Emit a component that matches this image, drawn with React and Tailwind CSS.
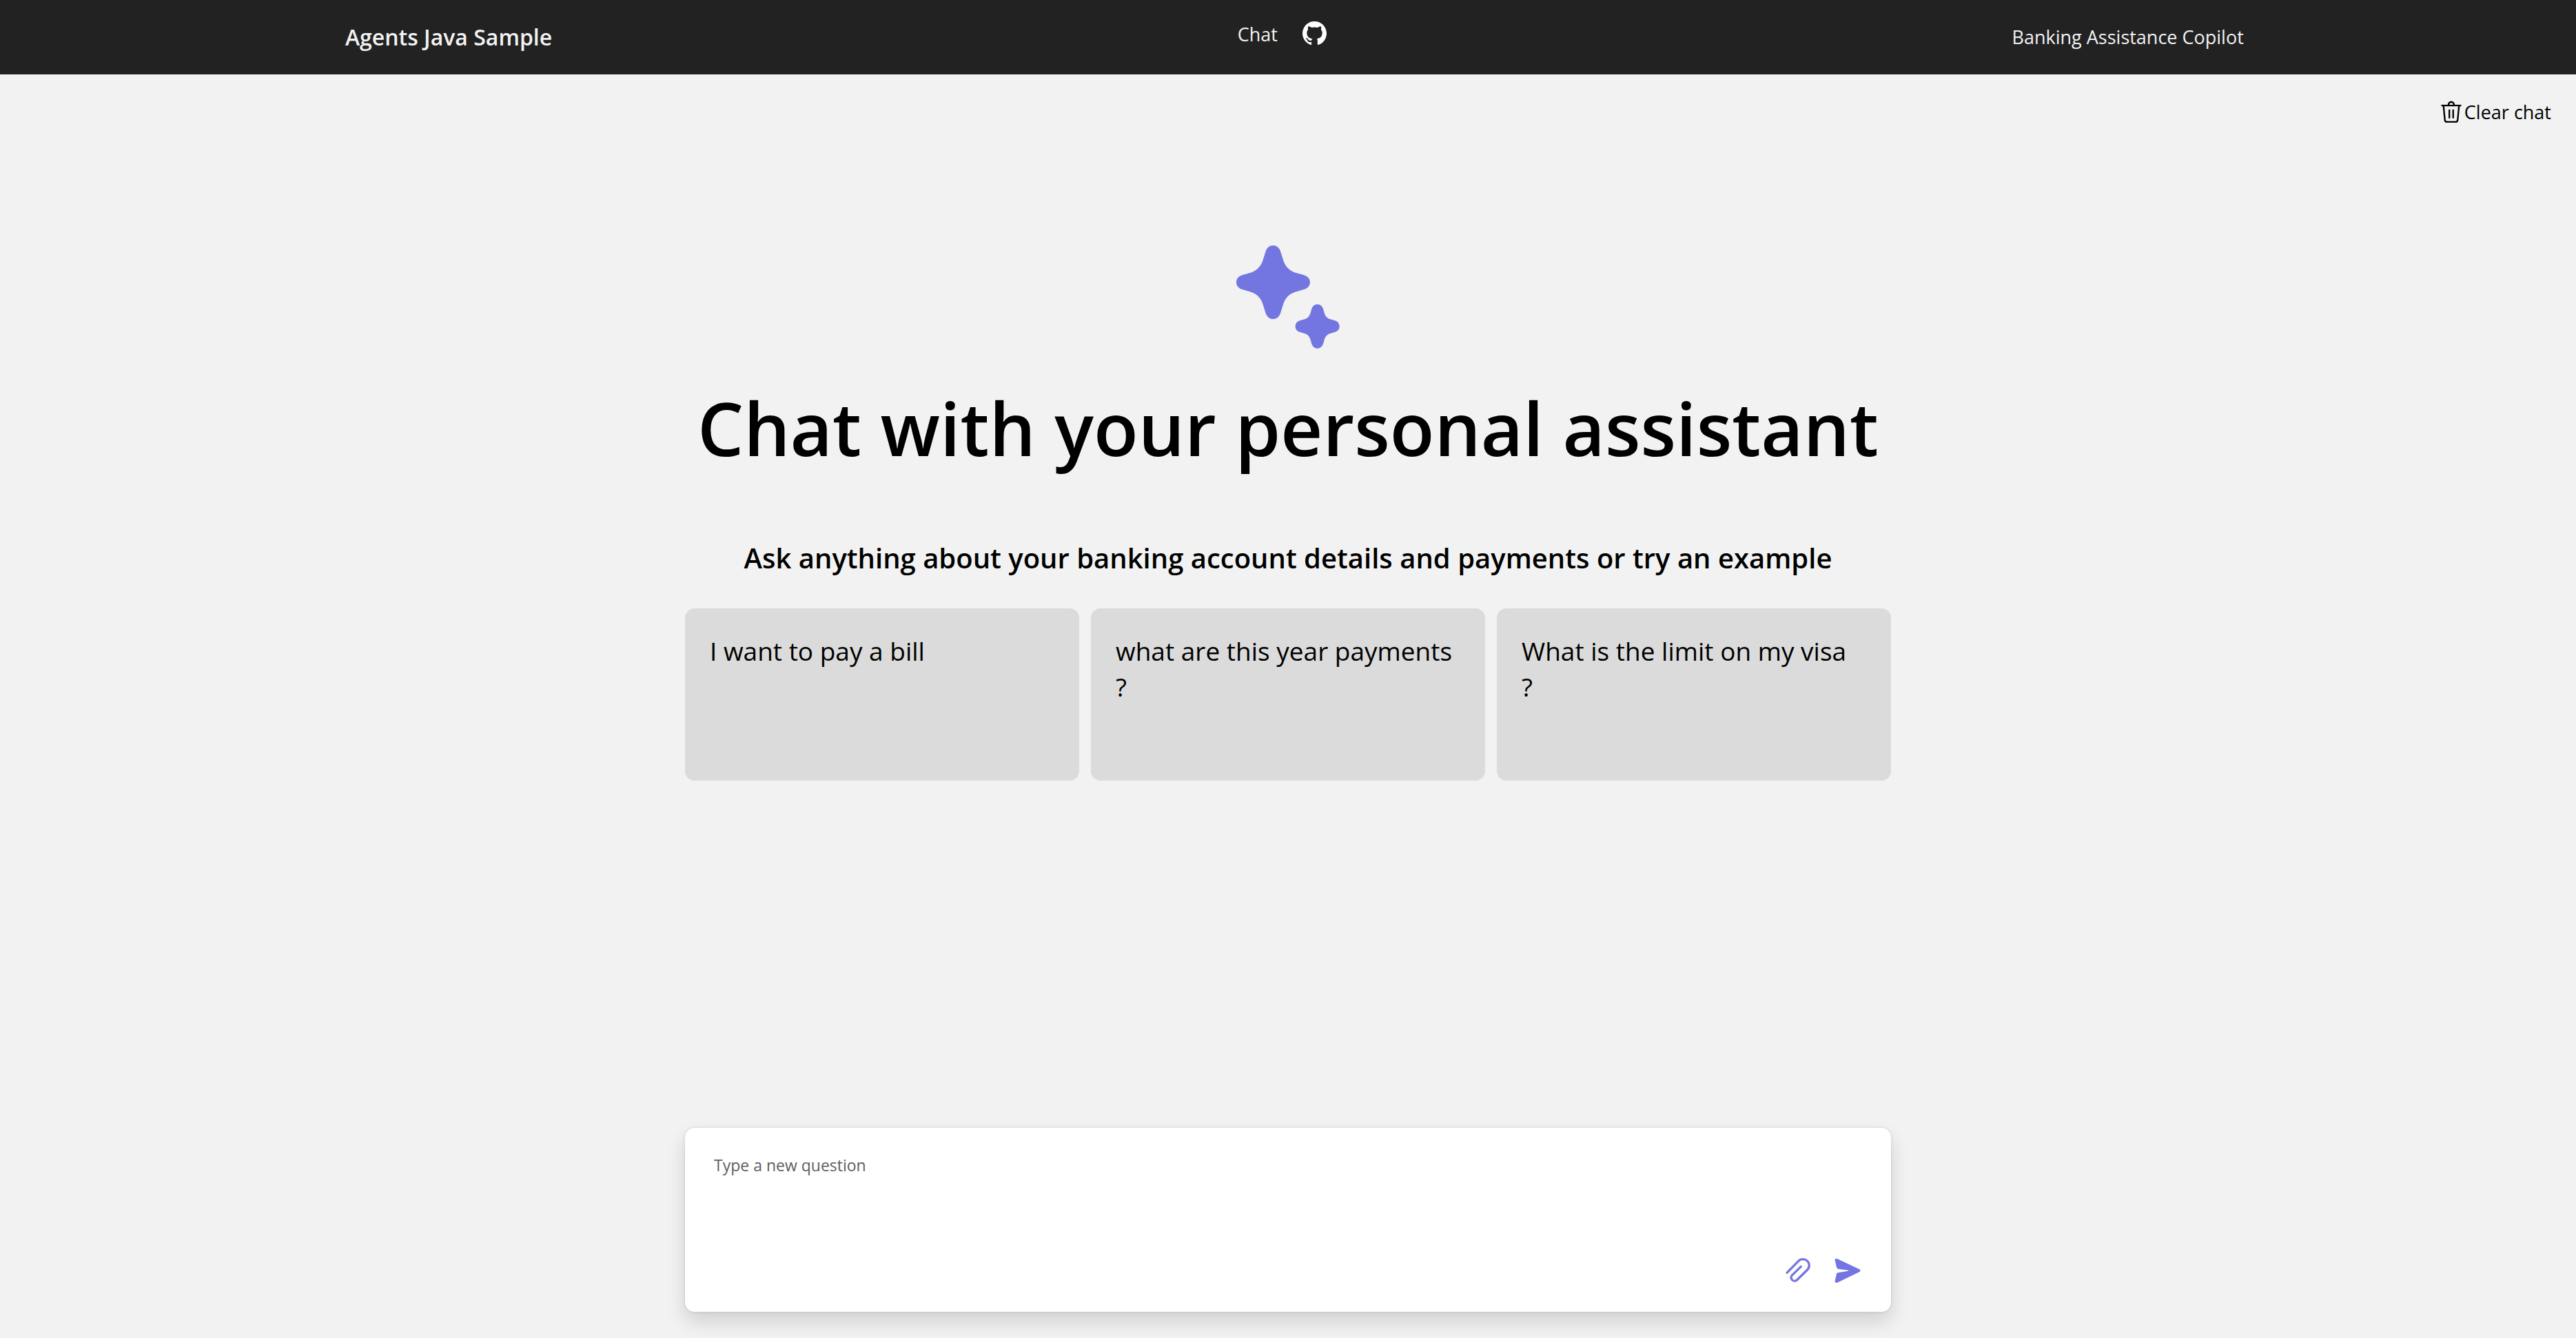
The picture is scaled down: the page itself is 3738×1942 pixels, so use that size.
const EXAMPLES = [
  "I want to pay a bill",
  "what are this year payments ?",
  "What is the limit on my visa ?",
];

function GitHubIcon() {
  return (
    <svg viewBox="0 0 16 16" className="size-[35px] fill-white" aria-hidden="true">
      <path d="M8 0C3.58 0 0 3.58 0 8c0 3.54 2.29 6.53 5.47 7.59.4.07.55-.17.55-.38 0-.19-.01-.82-.01-1.49-2.01.37-2.53-.49-2.69-.94-.09-.23-.48-.94-.82-1.13-.28-.15-.68-.52-.01-.53.63-.01 1.08.58 1.23.82.72 1.21 1.87.87 2.33.66.07-.52.28-.87.51-1.07-1.78-.2-3.64-.89-3.64-3.95 0-.87.31-1.59.82-2.15-.08-.2-.36-1.02.08-2.12 0 0 .67-.21 2.2.82.64-.18 1.32-.27 2-.27s1.36.09 2 .27c1.53-1.04 2.2-.82 2.2-.82.44 1.1.16 1.92.08 2.12.51.56.82 1.27.82 2.15 0 3.07-1.87 3.75-3.65 3.95.29.25.54.73.54 1.48 0 1.07-.01 1.93-.01 2.2 0 .21.15.46.55.38A8.01 8.01 0 0 0 16 8c0-4.42-3.58-8-8-8Z" />
    </svg>
  );
}

function TrashIcon() {
  return (
    <svg viewBox="0 0 24 24" className="size-[38px] fill-black" aria-hidden="true">
      <path d="M12 1.75a3.25 3.25 0 0 1 3.25 3.25h5.25a.75.75 0 0 1 .1 1.5h-.8L18.6 19.03a2.75 2.75 0 0 1-2.73 2.47H8.13a2.75 2.75 0 0 1-2.74-2.47L4.2 6.5h-.7a.75.75 0 0 1-.1-1.5h5.35c0-1.8 1.46-3.25 3.25-3.25Zm6.3 4.75H5.7l1.18 12.4c.06.62.6 1.1 1.25 1.1h7.74c.64 0 1.18-.48 1.25-1.1L18.3 6.5Zm-4.55 2.75c.38 0 .7.28.74.65v7.1a.75.75 0 0 1-1.48.1V10a.75.75 0 0 1 .74-.75Zm-3.5 0c.38 0 .7.28.75.65V17a.75.75 0 0 1-1.5.1V10c0-.41.34-.75.75-.75ZM12 3.25c-.97 0-1.75.78-1.75 1.75h3.5c0-.97-.79-1.75-1.75-1.75Z" />
    </svg>
  );
}

function SparkleIcon() {
  return (
    <svg viewBox="0 0 450 450" className="size-[150px] fill-[#7376e1]" aria-hidden="true">
      <path
        transform="translate(160 161)"
        d="M-160 0C-160-15-150-27-132-32L-97-42C-70-50-52-70-44-97L-33-132C-28-150-15-160 0-160C15-160 28-150 33-132L44-97C52-70 70-50 97-42L132-32C150-27 161-15 161 0C161 15 150 27 132 32L97 42C70 50 52 70 44 97L33 132C28 150 15 160 0 160C-15 160-28 150-33 132L-44 97C-52 70-70 50-97 42L-132 32C-150 27-160 15-160 0Z"
      />
      <path
        transform="translate(353 353)"
        d="M-96 0C-96-13-88-21-76-25L-56-31C-44-34-35-43-31-56L-25-76C-21-88-13-96 0-96C13-96 21-88 25-76L31-56C35-43 44-34 56-31L76-25C88-21 96-13 96 0C96 13 88 21 76 25L56 31C44 34 35 43 31 56L25 76C21 88 13 96 0 96C-13 96-21 88-25 76L-31 56C-35 43-44 34-56 31L-76 25C-88 21-96 13-96 0Z"
      />
    </svg>
  );
}

function AttachIcon() {
  return (
    <svg viewBox="145 128 126 126" className="size-[42px]" aria-hidden="true">
      <path
        d="M160 201L210 150A27 27 0 0 1 249 188L203 233A15 15 0 0 1 181 213L221 174"
        fill="none"
        stroke="#7376e1"
        strokeWidth="10"
        strokeLinecap="round"
        strokeLinejoin="round"
      />
    </svg>
  );
}

function SendIcon() {
  return (
    <svg viewBox="361 128 126 126" className="size-[42px] fill-[#7376e1]" aria-hidden="true">
      <path d="M369 147C368 141 374 137 379 140L476 186C481 189 481 194 476 197L379 244C374 246 368 242 369 236L376 206Q377 202 381 201L426 193Q431 192 426 190L382 184Q378 183 377 180Z" />
    </svg>
  );
}

export default function App() {
  return (
    <div className="flex min-h-screen flex-col bg-[#f2f2f2] font-['Open_Sans','Noto_Sans',sans-serif] text-black">
      <header className="flex h-[108px] items-center justify-between bg-[#222222] pr-[12.9%] pl-[13.4%] text-[27px] leading-[38px] text-[#f2f2f2]">
        <a href="#home" className="text-[32px] leading-[44px] font-semibold">
          Agents Java Sample
        </a>
        <nav className="flex items-start gap-9 pb-2">
          <a href="#chat">Chat</a>
          <a href="#github" aria-label="GitHub repository">
            <GitHubIcon />
          </a>
        </nav>
        <p>Banking Assistance Copilot</p>
      </header>

      <main className="flex flex-1 flex-col items-center">
        <div className="flex w-full justify-end pt-9 pr-9">
          <button type="button" className="flex items-center text-[27px] leading-[38px]">
            <TrashIcon />
            Clear chat
          </button>
        </div>

        <section className="flex w-full max-w-[1750px] flex-col items-center pt-[174px]">
          <SparkleIcon />
          <h1 className="mt-[55px] text-center text-[106px] leading-[120px] font-semibold">
            Chat with your personal assistant
          </h1>
          <h2 className="mt-[104px] text-center text-[40px] leading-[50px] font-semibold">
            Ask anything about your banking account details and payments or try an example
          </h2>
          <ul className="mt-12 grid w-full grid-cols-3 gap-[17px]">
            {EXAMPLES.map((text) => (
              <li key={text} className="flex">
                <button
                  type="button"
                  className="flex min-h-[250px] w-full items-start rounded-[14px] bg-[#dbdbdb] pt-9 pr-11 pl-9 text-left text-[37px] leading-[52px]"
                >
                  {text}
                </button>
              </li>
            ))}
          </ul>
        </section>

        <form
          className="mt-auto mb-[38px] flex w-full max-w-[1750px] flex-col rounded-[14px] bg-white pt-[38px] pr-[42px] pb-[39px] pl-[42px] shadow-[0_14px_28px_rgba(0,0,0,0.14),0_0_4px_rgba(0,0,0,0.12)]"
          onSubmit={(event) => event.preventDefault()}
        >
          <textarea
            aria-label="Type a new question"
            placeholder="Type a new question"
            className="block h-[148px] w-full resize-none bg-transparent text-[23px] leading-[32px] outline-none placeholder:text-[#605e5c]"
          />
          <div className="flex justify-end gap-[30px]">
            <button type="button" aria-label="Attach a file">
              <AttachIcon />
            </button>
            <button type="submit" aria-label="Send">
              <SendIcon />
            </button>
          </div>
        </form>
      </main>
    </div>
  );
}
